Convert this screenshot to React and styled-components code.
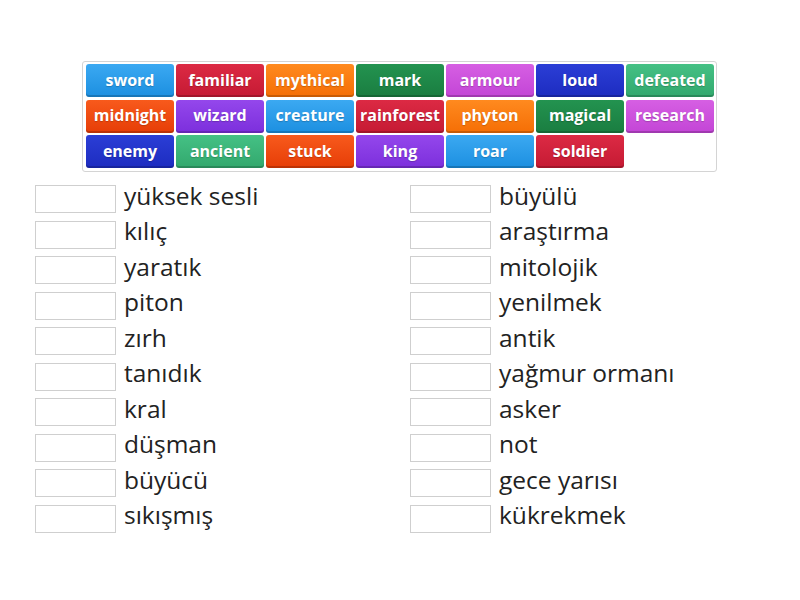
import { createGlobalStyle, styled } from "styled-components";

const GlobalStyle = createGlobalStyle`
  body {
    margin: 0;
    background: #fff;
    font-family: "Open Sans", "DejaVu Sans", sans-serif;
  }
`;

const palette = [
  ["#3ba9f2", "#1c8fe0"], // blue
  ["#dc2a44", "#c51a33"], // red
  ["#ff8a1f", "#f56e05"], // orange
  ["#239350", "#1a7d40"], // dark green
  ["#d65fe3", "#c345d6"], // pink
  ["#2b3ed6", "#1d2cc0"], // dark blue
  ["#45c185", "#32a86d"], // green
  ["#f85a1c", "#e63d07"], // red-orange
  ["#9447ec", "#7c2fdc"], // purple
];

const tiles = [
  "sword", "familiar", "mythical", "mark", "armour", "loud", "defeated",
  "midnight", "wizard", "creature", "rainforest", "phyton", "magical", "research",
  "enemy", "ancient", "stuck", "king", "roar", "soldier",
];

const leftWords = [
  "yüksek sesli", "kılıç", "yaratık", "piton", "zırh",
  "tanıdık", "kral", "düşman", "büyücü", "sıkışmış",
];

const rightWords = [
  "büyülü", "araştırma", "mitolojik", "yenilmek", "antik",
  "yağmur ormanı", "asker", "not", "gece yarısı", "kükrekmek",
];

export default function App() {
  return (
    <Page>
      <GlobalStyle />
      <TileBox>
        {tiles.map((t, i) => (
          <Tile key={t} $colors={palette[i % palette.length]}>
            {t}
          </Tile>
        ))}
      </TileBox>
      <Columns>
        <Column>
          {leftWords.map((w) => (
            <Row key={w}>
              <DropBox />
              <Word>{w}</Word>
            </Row>
          ))}
        </Column>
        <Column>
          {rightWords.map((w) => (
            <Row key={w}>
              <DropBox />
              <Word>{w}</Word>
            </Row>
          ))}
        </Column>
      </Columns>
    </Page>
  );
}

const Page = styled.div`
  width: 800px;
  height: 600px;
  padding-top: 61px;
  box-sizing: border-box;
`;

const TileBox = styled.div`
  margin-left: 82px;
  width: 635px;
  box-sizing: border-box;
  border: 1px solid #d4d4d4;
  border-radius: 3px;
  padding: 2px 2px 3px 3px;
  display: grid;
  grid-template-columns: repeat(7, 88px);
  grid-auto-rows: 33px;
  column-gap: 2px;
  row-gap: 2.5px;
`;

const Tile = styled.div`
  display: flex;
  align-items: center;
  justify-content: center;
  border-radius: 3px;
  background: linear-gradient(
    to bottom,
    ${(p) => p.$colors[0]},
    ${(p) => p.$colors[1]}
  );
  box-shadow: inset 0 -2px 0 rgba(0, 0, 0, 0.18);
  color: #fff;
  font-size: 16px;
  font-weight: 700;
  text-shadow: 0 1px 1px rgba(0, 0, 0, 0.2);
  padding-bottom: 2px;
  box-sizing: border-box;
  white-space: nowrap;
`;

const Columns = styled.div`
  display: grid;
  grid-template-columns: 375px 375px;
  padding-left: 35px;
  margin-top: 13px;
`;

const Column = styled.div`
  display: flex;
  flex-direction: column;
  gap: 7.5px;
`;

const Row = styled.div`
  display: flex;
  align-items: center;
  height: 28px;
  gap: 8px;
`;

const DropBox = styled.div`
  width: 81px;
  height: 28px;
  box-sizing: border-box;
  border: 1px solid #cfcfcf;
  background: #fff;
  flex-shrink: 0;
`;

const Word = styled.span`
  font-size: 24.5px;
  color: #222;
  line-height: 28px;
  margin-top: -7px;
  white-space: nowrap;
`;
